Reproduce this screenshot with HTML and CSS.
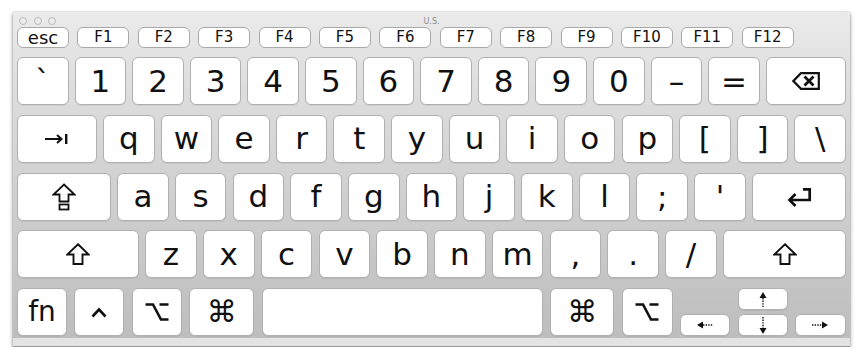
FILE: index.html
```html
<!DOCTYPE html>
<html lang="en">
<head>
    <meta charset="UTF-8">
    <title>Keyboard Viewer</title>
    <link rel="stylesheet" href="styles.css">
</head>
<body>
    <div class="window">
        <div class="titlebar">
            <div class="lights"><span></span><span></span><span></span></div>
            <div class="title">U.S.</div>
        </div>

        <div class="frow">
            <div class="fkey esc">esc</div>
            <div class="fkey">F1</div>
            <div class="fkey">F2</div>
            <div class="fkey">F3</div>
            <div class="fkey">F4</div>
            <div class="fkey">F5</div>
            <div class="fkey">F6</div>
            <div class="fkey">F7</div>
            <div class="fkey">F8</div>
            <div class="fkey">F9</div>
            <div class="fkey">F10</div>
            <div class="fkey">F11</div>
            <div class="fkey">F12</div>
        </div>

        <div class="board">
            <div class="row">
                <div class="key">`</div>
                <div class="key">1</div>
                <div class="key">2</div>
                <div class="key">3</div>
                <div class="key">4</div>
                <div class="key">5</div>
                <div class="key">6</div>
                <div class="key">7</div>
                <div class="key">8</div>
                <div class="key">9</div>
                <div class="key">0</div>
                <div class="key">–</div>
                <div class="key">=</div>
                <div class="key back">
                    <svg width="28" height="18" viewBox="0 0 28 18">
                        <path d="M9 1.2 H26.8 V16.8 H9 L1.4 9 Z" fill="none" stroke="#111" stroke-width="2.2" stroke-linejoin="miter"/>
                        <path d="M12.5 4.5 L21.5 13.5 M21.5 4.5 L12.5 13.5" stroke="#111" stroke-width="2.8"/>
                    </svg>
                </div>
            </div>

            <div class="row">
                <div class="key tab">
                    <svg width="24" height="12" viewBox="0 0 24 12">
                        <path d="M0 6 H16" stroke="#111" stroke-width="2"/>
                        <path d="M12 2 L16.5 6 L12 10" fill="none" stroke="#111" stroke-width="2"/>
                        <rect x="20" y="1" width="2.4" height="10" fill="#111"/>
                    </svg>
                </div>
                <div class="key">q</div>
                <div class="key">w</div>
                <div class="key">e</div>
                <div class="key">r</div>
                <div class="key">t</div>
                <div class="key">y</div>
                <div class="key">u</div>
                <div class="key">i</div>
                <div class="key">o</div>
                <div class="key">p</div>
                <div class="key">[</div>
                <div class="key">]</div>
                <div class="key">\</div>
            </div>

            <div class="row">
                <div class="key caps">
                    <svg width="24" height="28" viewBox="0 0 24 28">
                        <path d="M12 1.5 L22.5 11.5 H16.5 V18.5 H7.5 V11.5 H1.5 Z" fill="none" stroke="#111" stroke-width="1.8" stroke-linejoin="miter"/>
                        <rect x="7.5" y="21.5" width="9" height="5" fill="none" stroke="#111" stroke-width="1.8"/>
                    </svg>
                </div>
                <div class="key">a</div>
                <div class="key">s</div>
                <div class="key">d</div>
                <div class="key">f</div>
                <div class="key">g</div>
                <div class="key">h</div>
                <div class="key">j</div>
                <div class="key">k</div>
                <div class="key">l</div>
                <div class="key">;</div>
                <div class="key">'</div>
                <div class="key ret">
                    <svg width="26" height="20" viewBox="0 0 26 20">
                        <path d="M17 2.3 H23.7 V13 H4" fill="none" stroke="#111" stroke-width="2.7"/>
                        <path d="M9.5 7 L3.5 13 L9.5 19" fill="none" stroke="#111" stroke-width="2.7"/>
                    </svg>
                </div>
            </div>

            <div class="row">
                <div class="key lshift">
                    <svg width="24" height="22" viewBox="0 0 24 22">
                        <path d="M12 1.3 L22.7 11.5 H16.5 V21 H7.5 V11.5 H1.3 Z" fill="none" stroke="#111" stroke-width="1.9" stroke-linejoin="miter"/>
                    </svg>
                </div>
                <div class="key">z</div>
                <div class="key">x</div>
                <div class="key">c</div>
                <div class="key">v</div>
                <div class="key">b</div>
                <div class="key">n</div>
                <div class="key">m</div>
                <div class="key">,</div>
                <div class="key">.</div>
                <div class="key">/</div>
                <div class="key rshift">
                    <svg width="24" height="22" viewBox="0 0 24 22">
                        <path d="M12 1.3 L22.7 11.5 H16.5 V21 H7.5 V11.5 H1.3 Z" fill="none" stroke="#111" stroke-width="1.9" stroke-linejoin="miter"/>
                    </svg>
                </div>
            </div>

            <div class="row bottom">
                <div class="key fn">fn</div>
                <div class="key mod">
                    <svg width="16" height="11" viewBox="0 0 16 11">
                        <path d="M1.5 9.5 L8 2.5 L14.5 9.5" fill="none" stroke="#111" stroke-width="2.6"/>
                    </svg>
                </div>
                <div class="key mod">
                    <svg width="24" height="20" viewBox="0 0 24 20">
                        <path d="M0.5 2.5 H8 L16 17.5 H23.5 M14.5 2.5 H23.5" fill="none" stroke="#111" stroke-width="2.6"/>
                    </svg>
                </div>
                <div class="key cmd sym">⌘</div>
                <div class="key space"></div>
                <div class="key rcmd sym">⌘</div>
                <div class="key ralt">
                    <svg width="24" height="20" viewBox="0 0 24 20">
                        <path d="M0.5 2.5 H8 L16 17.5 H23.5 M14.5 2.5 H23.5" fill="none" stroke="#111" stroke-width="2.6"/>
                    </svg>
                </div>
                <div class="key arrow low">
                    <svg width="16" height="8" viewBox="0 0 16 8">
                        <path d="M6 4 H16" stroke="#111" stroke-width="1.4" stroke-dasharray="1.4 1.2"/>
                        <path d="M0 4 L6 0.5 V7.5 Z" fill="#111"/>
                    </svg>
                </div>
                <div class="updown">
                    <div class="key arrow">
                        <svg width="8" height="15" viewBox="0 0 8 15">
                            <path d="M4 6 V15" stroke="#111" stroke-width="1.4" stroke-dasharray="1.4 1.2"/>
                            <path d="M4 0 L7.5 6 H0.5 Z" fill="#111"/>
                        </svg>
                    </div>
                    <div class="key arrow">
                        <svg width="8" height="17" viewBox="0 0 8 17">
                            <path d="M4 0 V11" stroke="#111" stroke-width="1.4" stroke-dasharray="1.4 1.2"/>
                            <path d="M4 17 L7.5 11 H0.5 Z" fill="#111"/>
                        </svg>
                    </div>
                </div>
                <div class="key arrow low right">
                    <svg width="16" height="8" viewBox="0 0 16 8">
                        <path d="M0 4 H10" stroke="#111" stroke-width="1.4" stroke-dasharray="1.4 1.2"/>
                        <path d="M16 4 L10 0.5 V7.5 Z" fill="#111"/>
                    </svg>
                </div>
            </div>
        </div>

        <div class="strip"></div>
    </div>
</body>
</html>
```

FILE: styles.css
```css
body {
    margin: 0;
    padding: 0;
    background: #fff;
    font-family: "DejaVu Sans", sans-serif;
    color: #111;
}
.window {
    margin: 12px 0 0 13px;
    width: 837px;
    background: linear-gradient(#ebebeb, #e2e2e2 14%, #d8d8d8 35%, #bcbcbc 100%);
    box-shadow: 0 2px 4px rgba(0, 0, 0, 0.45), 0 0 1px rgba(0, 0, 0, 0.3);
}
.titlebar {
    height: 15px;
    display: grid;
    grid-template-columns: 1fr auto 1fr;
    align-items: center;
}
.lights {
    display: flex;
    gap: 6.5px;
    padding-left: 6px;
    padding-top: 2px;
}
.lights span {
    width: 6px;
    height: 6px;
    border-radius: 50%;
    border: 1px solid #b9b9b9;
    background: #ececec;
}
.title {
    font-size: 8px;
    color: #8a8a8a;
    padding-top: 3px;
}
.frow {
    display: flex;
    gap: 8.4px;
    padding: 0 4px;
}
.fkey {
    width: 50px;
    height: 19px;
    background: #fff;
    border: 1px solid #a9a9a9;
    border-radius: 6px;
    display: flex;
    align-items: center;
    justify-content: center;
    font-size: 15px;
    line-height: 1;
}
.fkey.esc {
    font-size: 18px;
}
.board {
    padding: 9px 4px 2px;
    display: flex;
    flex-direction: column;
    gap: 9.75px;
}
.row {
    display: flex;
    justify-content: space-between;
    align-items: flex-end;
}
.key {
    box-sizing: border-box;
    width: 51.6px;
    height: 48px;
    background: #fff;
    border: 1px solid #b0b0b0;
    border-radius: 6px;
    box-shadow: 0 1px 0 rgba(0, 0, 0, 0.06);
    display: flex;
    align-items: center;
    justify-content: center;
    font-size: 31px;
    line-height: 1;
}
.key.back, .key.tab { width: 80px; }
.key.caps { width: 94px; }
.key.ret { width: 94px; }
.key.lshift { width: 122px; }
.key.rshift { width: 123px; }
.key.fn { width: 50px; font-size: 28px; }
.key.mod { width: 50px; }
.key.cmd { width: 65px; }
.key.space { width: 281px; }
.key.rcmd { width: 64px; }
.key.ralt { width: 51px; }
.key.sym {
    font-size: 30px;
}
.key.arrow {
    width: 50px;
    height: 22px;
}
.key.arrow.right { width: 51px; }
.key.low {
    align-items: flex-end;
    padding-bottom: 6px;
}
.updown {
    display: flex;
    flex-direction: column;
    gap: 4px;
}
.strip {
    height: 8px;
    background: #e3e3e3;
    border-bottom: 1px solid #9a9a9a;
}
```
